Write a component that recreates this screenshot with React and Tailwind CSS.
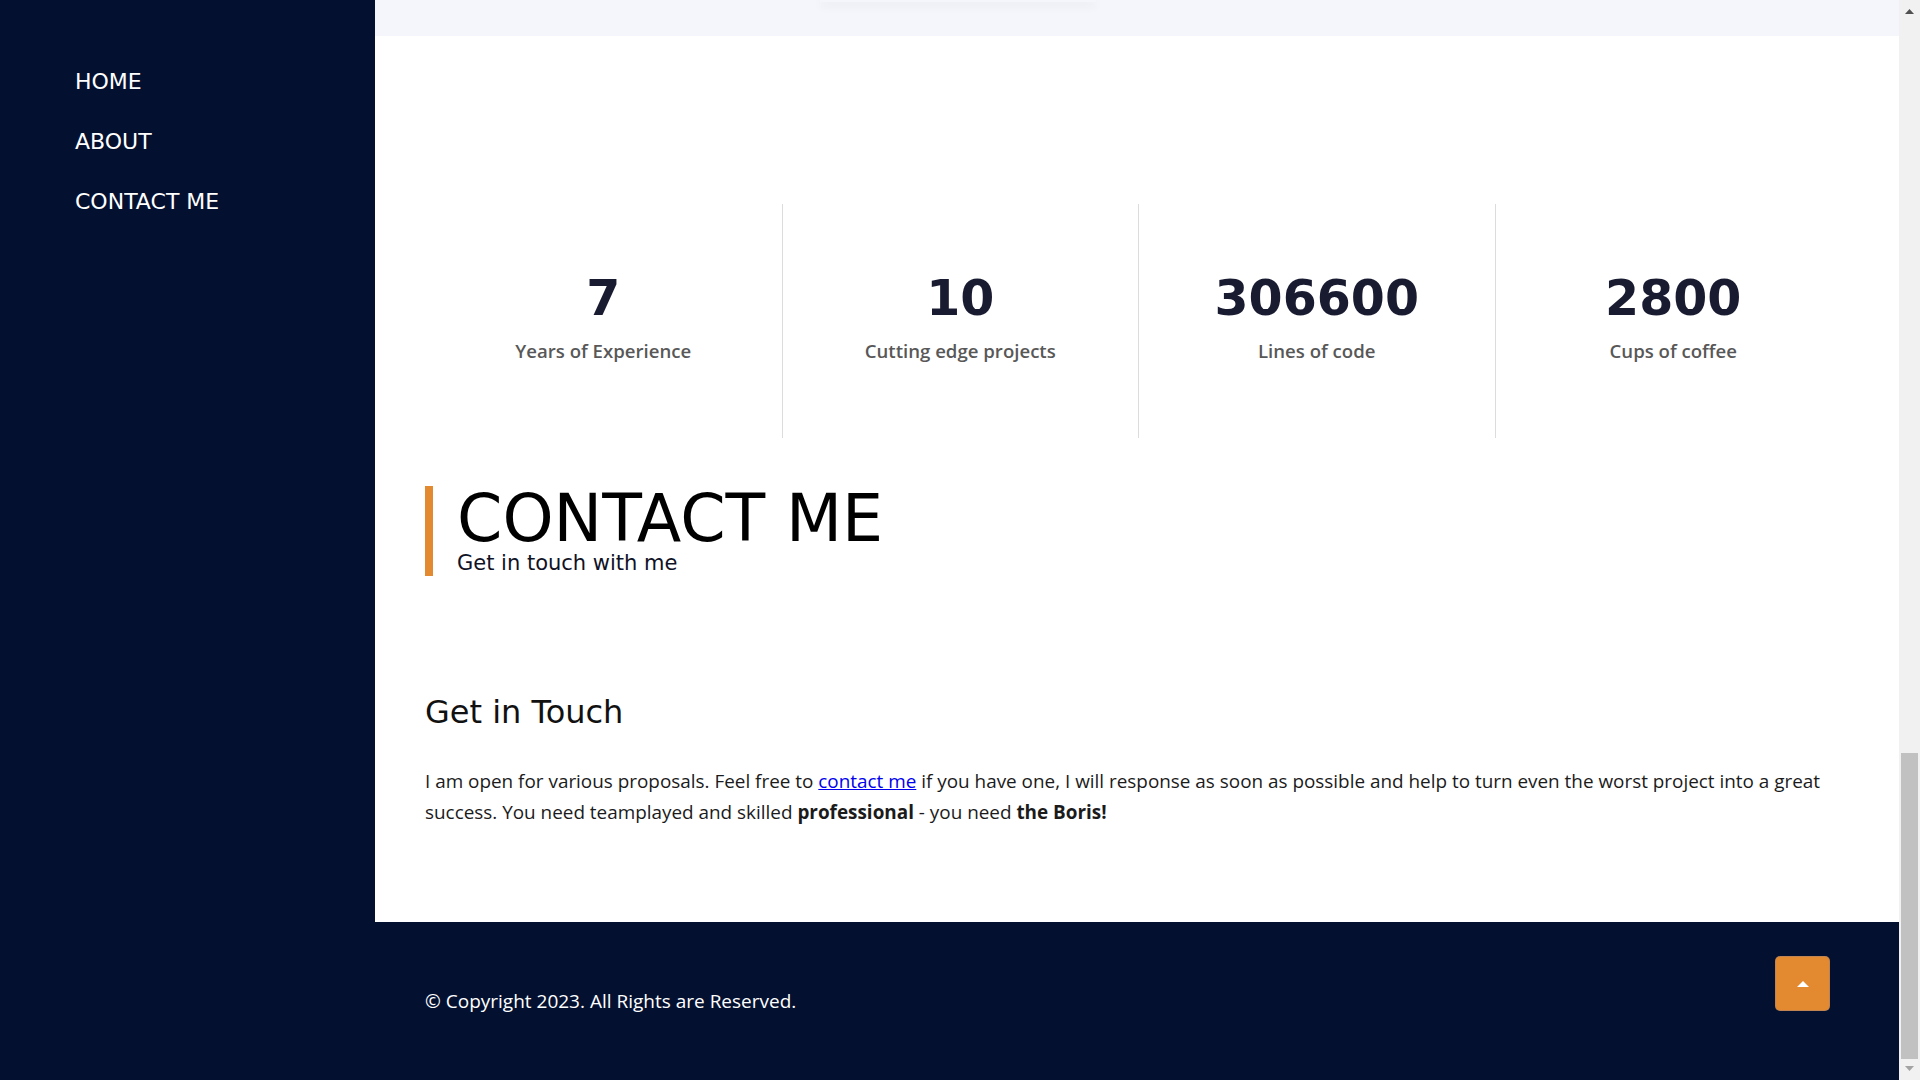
const stats = [
  { value: '7', label: 'Years of Experience' },
  { value: '10', label: 'Cutting edge projects' },
  { value: '306600', label: 'Lines of code' },
  { value: '2800', label: 'Cups of coffee' }
]

const navItems = ['HOME', 'ABOUT', 'CONTACT ME']

const heading = { fontFamily: '"DejaVu Sans", sans-serif' }

function Sidebar() {
  return (
    <aside className="w-[375px] shrink-0 bg-[#031030] pt-[52px] pl-[75px]">
      <nav className="flex flex-col">
        {navItems.map((item) => (
          <a
            key={item}
            href="#"
            className="h-[60px] leading-[60px] text-[22px] text-white font-['DejaVu_Sans',sans-serif]"
          >
            {item}
          </a>
        ))}
      </nav>
    </aside>
  )
}

function Stats() {
  return (
    <div className="grid grid-cols-4 pl-[50px] pr-12 pt-[168px]">
      {stats.map((stat, i) => (
        <div
          key={stat.label}
          className={`h-[234px] flex flex-col items-center pt-[66px] ${i > 0 ? 'border-l border-[#dcdcdc]' : ''}`}
        >
          <div className="text-[49px] leading-[58px] font-bold text-[#191b31] font-['DejaVu_Sans',sans-serif]">
            {stat.value}
          </div>
          <div className="mt-[9px] text-[18.6px] leading-[27px] font-semibold text-[#585858] font-['Open_Sans',sans-serif]">
            {stat.label}
          </div>
        </div>
      ))}
    </div>
  )
}

function Contact() {
  return (
    <section className="pl-[50px] pr-12">
      {/* section title with orange bar */}
      <div className="mt-[48px] border-l-8 border-[#e3892f] pl-[24px]">
        <h1 className="text-[65px] leading-none text-black font-['DejaVu_Sans',sans-serif]">CONTACT ME</h1>
        <p className="text-[21px] leading-[25px] text-[#101225] font-['DejaVu_Sans',sans-serif]">Get in touch with me</p>
      </div>

      <h2 className="mt-[118px] text-[32px] leading-[37px] text-[#111] font-['DejaVu_Sans',sans-serif]">Get in Touch</h2>
      <p className="mt-[35px] text-[18.9px] leading-[31px] text-[#1b1b1b] font-['Open_Sans',sans-serif]">
        I am open for various proposals. Feel free to{' '}
        <a href="#" className="text-[#0000ee] underline">contact me</a>{' '}
        if you have one, I will response as soon as possible and help to turn even the worst project into a great
        success. You need teamplayed and skilled <b>professional</b> - you need <b>the Boris!</b>
      </p>
    </section>
  )
}

function Footer() {
  return (
    <footer className="mt-auto h-[158px] shrink-0 bg-[#031030] flex justify-between pl-[50px] pr-12">
      <p className="pt-[66px] text-[19px] leading-[27px] text-white font-['Open_Sans',sans-serif]">
        © Copyright 2023. All Rights are Reserved.
      </p>
      <button className="mt-[34px] mr-[21px] w-[55px] h-[55px] rounded-[5px] bg-[#e3892f] border border-[#8a7e86]/40 flex items-center justify-center">
        <svg width="12" height="6" viewBox="0 0 12 6">
          <polygon points="0,6 6,0 12,6" fill="#fff" />
        </svg>
      </button>
    </footer>
  )
}

function Scrollbar() {
  return (
    <div className="w-[21px] shrink-0 bg-[#f1f1f1] flex flex-col">
      <div className="h-[17px] flex justify-center pt-[9px]">
        <svg width="9" height="5" viewBox="0 0 9 5">
          <polygon points="0,5 4.5,0 9,5" fill="#505050" />
        </svg>
      </div>
      <div className="flex-1" />
      <div className="h-[306px] mx-[2px] bg-[#c1c1c1]" />
      <div className="h-[21px] flex justify-center pt-[7px]">
        <svg width="9" height="5" viewBox="0 0 9 5">
          <polygon points="0,0 9,0 4.5,5" fill="#a3a3a3" />
        </svg>
      </div>
    </div>
  )
}

export default function App() {
  return (
    <div className="flex w-full h-screen overflow-hidden bg-white" style={heading}>
      <Sidebar />
      <main className="flex-1 flex flex-col min-w-0">
        {/* leftover strip from previous section */}
        <div className="h-[36px] shrink-0 bg-[#f5f6fb]">
          <div className="ml-[445px] w-[276px] h-[2px] bg-[#f5f6fb] shadow-[0_3px_10px_rgba(20,20,60,0.12)]" />
        </div>
        <Stats />
        <Contact />
        <Footer />
      </main>
      <Scrollbar />
    </div>
  )
}
